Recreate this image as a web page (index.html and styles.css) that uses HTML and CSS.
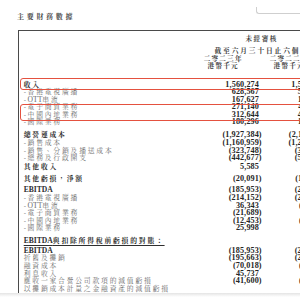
FILE: index.html
```html
<!DOCTYPE html>
<html lang="zh-Hant">
<head>
<meta charset="utf-8">
<link rel="stylesheet" href="styles.css">
</head>
<body>
<div class="page">
  <div class="corner"></div>
  <div class="title">主要財務數據</div>
  <div class="doc">
    <div class="head">
      <div class="hrow h1"><span class="hall">未經審核</span></div>
      <div class="hrow h2"><span class="hall wide">截至六月三十日止六個月</span></div>
      <div class="hrow"><span></span><span class="hcol">二零二三年</span><span class="hcol">二零二二年</span></div>
      <div class="hrow"><span></span><span class="hcol">港幣千元</span><span class="hcol">港幣千元</span></div>
    </div>

    <div class="sec s1">
      <div class="hl hl1"><div class="row b"><span class="lab">收入</span><span class="n p">1,560,274</span><span class="n p">1,587,396</span></div></div>
      <div class="row"><span class="lab"><i class="d">-</i>香港電視廣播</span><span class="n p">628,567</span><span class="n p">563,480</span></div>
      <div class="row"><span class="lab"><i class="d">-</i><span class="lat">OTT</span>串流</span><span class="n p">167,627</span><span class="n p">131,605</span></div>
      <div class="hl hl2">
        <div class="row"><span class="lab"><i class="d">-</i>電子商貿業務</span><span class="n p">271,140</span><span class="n p">411,223</span></div>
        <div class="row"><span class="lab"><i class="d">-</i>中國內地業務</span><span class="n p">312,644</span><span class="n p">402,108</span></div>
      </div>
      <div class="row"><span class="lab"><i class="d">-</i>國際業務</span><span class="n p">180,296</span><span class="n p">183,447</span></div>
    </div>

    <div class="sec s2">
      <div class="row b"><span class="lab">總營運成本</span><span class="n">(1,927,384)</span><span class="n">(2,110,576)</span></div>
      <div class="row"><span class="lab"><i class="d">-</i>銷售成本</span><span class="n">(1,160,959)</span><span class="n">(1,253,910)</span></div>
      <div class="row"><span class="lab"><i class="d">-</i>銷售、分銷及播送成本</span><span class="n">(323,748)</span><span class="n">(351,286)</span></div>
      <div class="row"><span class="lab"><i class="d">-</i>總務及行政開支</span><span class="n">(442,677)</span><span class="n">(505,380)</span></div>
    </div>

    <div class="sec s3">
      <div class="row b"><span class="lab">其他收入</span><span class="n p">5,585</span><span class="n p">38,812</span></div>
    </div>

    <div class="sec s4">
      <div class="row b"><span class="lab">其他虧損，淨額</span><span class="n">(20,091)</span><span class="n">(115,520)</span></div>
    </div>

    <div class="sec s5">
      <div class="row b"><span class="lab"><span class="lat">EBITDA</span></span><span class="n">(185,953)</span><span class="n">(201,486)</span></div>
      <div class="row"><span class="lab"><i class="d">-</i>香港電視廣播</span><span class="n">(214,152)</span><span class="n">(228,760)</span></div>
      <div class="row"><span class="lab"><i class="d">-</i><span class="lat">OTT</span>串流</span><span class="n p">36,343</span><span class="n">(24,716)</span></div>
      <div class="row"><span class="lab"><i class="d">-</i>電子商貿業務</span><span class="n">(21,689)</span><span class="n">(9,843)</span></div>
      <div class="row"><span class="lab"><i class="d">-</i>中國內地業務</span><span class="n">(12,453)</span><span class="n">(10,218)</span></div>
      <div class="row"><span class="lab"><i class="d">-</i>國際業務</span><span class="n p">25,998</span><span class="n p">33,891</span></div>
    </div>

    <div class="sec s6">
      <div class="row b"><span class="lab ul"><span class="lat">EBITDA</span>與扣除所得稅前虧損的對賬：</span></div>
    </div>

    <div class="sec s7">
      <div class="row b"><span class="lab"><span class="lat">EBITDA</span></span><span class="n">(185,953)</span><span class="n">(201,486)</span></div>
      <div class="row"><span class="lab">折舊及攤銷</span><span class="n">(195,663)</span><span class="n">(218,594)</span></div>
      <div class="row"><span class="lab">融資成本</span><span class="n">(70,018)</span><span class="n">(52,917)</span></div>
      <div class="row"><span class="lab">利息收入</span><span class="n p">45,737</span><span class="n p">29,203</span></div>
      <div class="row"><span class="lab">應收一家合營公司款項的減值虧損</span><span class="n">(41,600)</span><span class="n">(46,400)</span></div>
      <div class="row"><span class="lab">以攤銷成本計量之金融資產的減值虧損</span></div>
    </div>
  </div>
  <div class="shade"></div>
</div>
</body>
</html>
```

FILE: styles.css
```css
html, body {
  margin: 0;
  padding: 0;
  width: 300px;
  height: 300px;
  overflow: hidden;
  background: #ffffff;
}

.page {
  position: relative;
  width: 300px;
  height: 300px;
  overflow: hidden;
  font-family: "Liberation Serif", "Noto Serif CJK TC", "Noto Sans CJK TC", serif;
  color: #6e6e6e;
}

.corner {
  position: absolute;
  top: 7px;
  left: 256px;
  width: 60px;
  height: 6px;
  border-left: 1px solid #cfcfcf;
  border-bottom: 1px solid #cfcfcf;
  border-bottom-left-radius: 3px;
}

.title {
  padding: 12.5px 0 0 17px;
  height: 8px;
  font-size: 7px;
  line-height: 8px;
  font-weight: 700;
  letter-spacing: 2.7px;
  color: #4a4a4a;
}

.doc {
  margin: 9px 0 0 18px;
  width: 330px;
  height: 262px;
  padding-left: 4.7px;
  border-left: 1.3px solid #4a4a4a;
  border-top: 1.3px solid #4a4a4a;
  overflow: hidden;
}

.head {
  padding-top: 4.5px;
}

.hrow {
  display: grid;
  grid-template-columns: 172px 66px 66px;
  height: 7.5px;
  line-height: 7.5px;
  font-size: 6.6px;
  font-weight: 700;
  color: #3c3c3c;
  letter-spacing: 1.5px;
  white-space: nowrap;
}

.h1 {
  margin-bottom: 4.5px;
}

.hall {
  grid-column: 2 / 4;
  text-align: center;
}

.wide {
  letter-spacing: 1.9px;
  font-size: 6.7px;
}

.hcol {
  text-align: center;
  padding-right: 11px;
  letter-spacing: 1.2px;
}

.sec {
  display: flex;
  flex-direction: column;
}

.s1 { margin-top: 11px; }
.s2 { margin-top: 5.4px; }
.s3 { margin-top: 1.6px; }
.s4 { margin-top: 4.4px; }
.s5 { margin-top: 3.4px; }
.s6 { margin-top: 4.9px; }
.s7 { margin-top: 2.4px; }

.row {
  display: grid;
  grid-template-columns: 172px 66px 66px;
  align-items: center;
  height: 7.6px;
  line-height: 7.6px;
  white-space: nowrap;
}

.lab {
  font-size: 6.8px;
  letter-spacing: 1.8px;
  color: #6c6c6c;
}

.b .lab {
  font-weight: 700;
  color: #2e2e2e;
}

.ul {
  text-decoration: underline;
  text-decoration-thickness: 1px;
  text-underline-offset: 1.5px;
  overflow: visible;
}

.lat {
  font-family: "Liberation Serif", serif;
  font-size: 7.6px;
  letter-spacing: 0;
}

.d {
  font-style: normal;
  font-family: "Liberation Serif", serif;
  letter-spacing: 0;
  margin-right: 1.6px;
}

.n {
  text-align: right;
  font-family: "Liberation Serif", serif;
  font-size: 8.2px;
  font-weight: 700;
  color: #262626;
  letter-spacing: 0.1px;
}

.n.p {
  padding-right: 2.7px;
}

.hl {
  position: relative;
}

.hl::after {
  content: "";
  position: absolute;
  left: -3.3px;
  right: -40px;
  border: 1.4px solid #e4513f;
  border-radius: 3px;
  pointer-events: none;
}

.hl1::after {
  top: -3px;
  bottom: -2.4px;
}

.hl2::after {
  top: 0.5px;
  bottom: -3px;
}

.shade {
  height: 4px;
  margin-top: 0.5px;
  background: linear-gradient(#e4e4e4, #ffffff);
}
```
